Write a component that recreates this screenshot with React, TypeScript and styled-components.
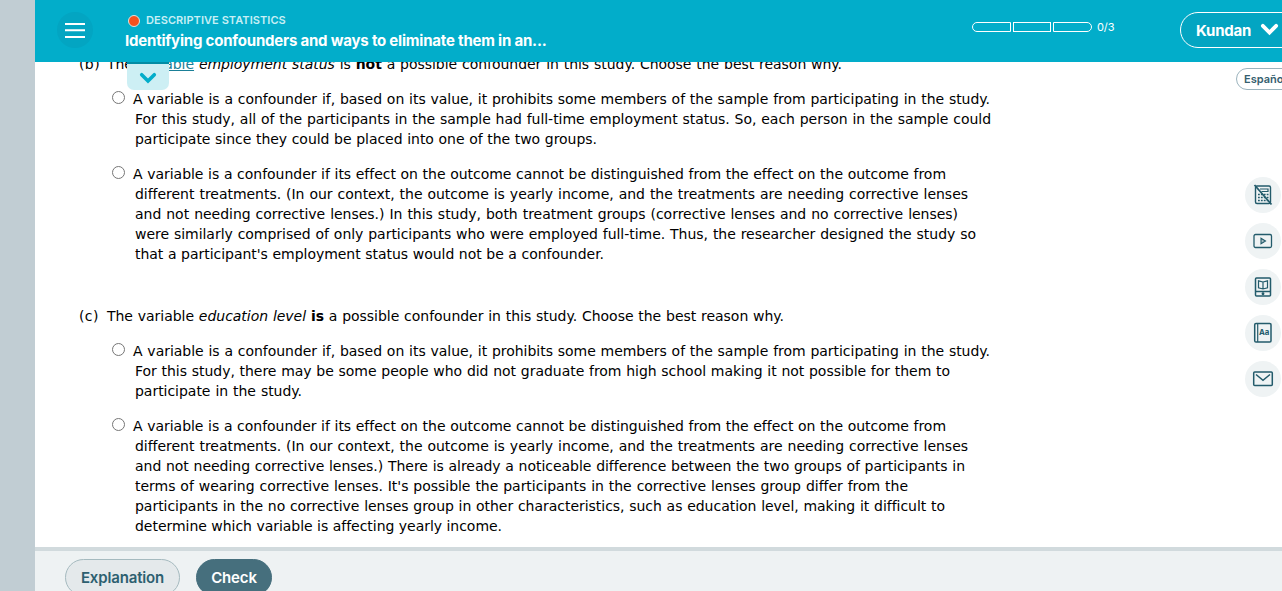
import type { ReactNode } from 'react';
import styled, { createGlobalStyle } from 'styled-components';

const GlobalStyle = createGlobalStyle`
  * {
    box-sizing: border-box;
  }
  body {
    margin: 0;
    overflow: hidden;
    background: #c1cdd3;
  }
`;

const Page = styled.div`
  height: 591px;
  padding-left: 35px;
  display: flex;
  flex-direction: column;
  overflow: hidden;
  background: #c1cdd3;
  font-family: Inter, "Liberation Sans", sans-serif;
`;

const Header = styled.header`
  flex: none;
  height: 62px;
  display: flex;
  align-items: flex-start;
  background: #02adca;
  color: white;
`;

const MenuButton = styled.button`
  flex: none;
  width: 36px;
  height: 36px;
  margin: 12px 0 0 22px;
  padding: 0;
  border: 0;
  border-radius: 50%;
  background: #03a5c2;
`;

const Titles = styled.div`
  width: 440px;
  margin: 13px 0 0 32px;
`;

const Topic = styled.div`
  display: flex;
  align-items: center;
  height: 14px;
  padding-left: 3px;
  gap: 6px;
  color: #c7eff5;
  font-size: 11px;
  font-weight: 600;
  letter-spacing: 0.06px;
  white-space: nowrap;
`;

const TopicDot = styled.span`
  width: 12px;
  height: 12px;
  margin-top: 2px;
  border: 1px solid #d9e5e2;
  border-radius: 50%;
  background: #f4511e;
`;

const LessonTitle = styled.h1`
  margin: 4px 0 0;
  font-size: 15px;
  line-height: 20px;
  font-weight: 700;
  letter-spacing: -0.2px;
  white-space: nowrap;
`;

const Progress = styled.div`
  display: flex;
  align-items: center;
  height: 14px;
  margin: 20px 0 0 407px;
  gap: 2px;
`;

const ProgressStep = styled.span`
  width: 38px;
  height: 10px;
  border: 1px solid white;

  &:first-child {
    width: 39px;
    border-radius: 5px 0 0 5px;
  }
  &:nth-child(3) {
    width: 39px;
    border-radius: 0 5px 5px 0;
  }
`;

const ProgressCount = styled.span`
  margin-left: 3px;
  font-size: 11px;
  line-height: 14px;
  letter-spacing: -0.1px;
`;

const UserButton = styled.button`
  flex: none;
  display: flex;
  align-items: center;
  width: 122px;
  height: 36px;
  margin: 12px -20px 0 auto;
  padding: 0 0 0 15px;
  gap: 9px;
  border: 1px solid white;
  border-radius: 18px;
  background: #03a5c2;
  color: white;
  font: 700 15px Inter, sans-serif;
  letter-spacing: -0.2px;
`;

const Content = styled.main`
  position: relative;
  flex: 1;
  min-height: 0;
  display: flex;
  justify-content: space-between;
  overflow: hidden;
  background: white;
`;

const ExpandTab = styled.button`
  position: absolute;
  left: 92px;
  top: 0;
  width: 42px;
  height: 28px;
  padding: 2px 0 0;
  display: flex;
  align-items: center;
  justify-content: center;
  border: 0;
  border-top: 2px solid #028ca4;
  border-radius: 0 0 7px 7px;
  background: #cdeff4;
`;

const Questions = styled.div`
  flex: none;
  margin-top: -8px;
  padding-left: 44px;
  color: black;
  font-family: Verdana, "DejaVu Sans", sans-serif;
  font-size: 14px;
  line-height: 20px;
`;

const Question = styled.section`
  margin-bottom: 42px;
`;

const Prompt = styled.div`
  display: flex;
`;

const PromptLabel = styled.span`
  width: 28px;
  letter-spacing: 0.4px;
`;

const Option = styled.label`
  display: flex;
  margin-top: 15px;
  padding-left: 33px;
`;

const Radio = styled.input`
  width: 13px;
  height: 13px;
  margin: 2px 8px 0 0;
`;

const OptionText = styled.div`
  padding-left: 2px;
`;

const Line = styled.div<{ $width: number; $outdent?: boolean }>`
  width: ${({ $width }) => $width}px;
  margin-left: ${({ $outdent }) => ($outdent ? -2 : 0)}px;
  height: 20px;
  letter-spacing: -0.03px;
  white-space: nowrap;
  text-align-last: justify;
`;

const Term = styled.a`
  color: #1a7f97;
  text-decoration: underline;
`;

const Tools = styled.aside`
  flex: none;
  width: 46px;
  padding-top: 6px;
  display: flex;
  flex-direction: column;
`;

const LanguageButton = styled.button`
  flex: none;
  width: 70px;
  height: 22px;
  margin-bottom: 87px;
  padding: 0 0 0 7px;
  border: 1px solid #9bb3bd;
  border-radius: 11px;
  background: white;
  color: #36606f;
  font: 600 11px Inter, sans-serif;
  text-align: left;
`;

const ToolButton = styled.button`
  flex: none;
  display: flex;
  align-items: center;
  justify-content: center;
  width: 36px;
  height: 36px;
  margin: 0 0 10px 9px;
  padding: 0;
  border: 0;
  border-radius: 50%;
  background: #eff3f4;
  color: #235b6b;
`;

const Footer = styled.footer`
  flex: none;
  height: 44px;
  display: flex;
  align-items: flex-start;
  padding: 8px 0 0 30px;
  gap: 16px;
  border-top: 4px solid #d1dadd;
  background: #eef2f3;
`;

const ActionButton = styled.button<{ $primary?: boolean }>`
  flex: none;
  width: ${({ $primary }) => ($primary ? 76 : 115)}px;
  height: 37px;
  padding: 0;
  border: 1px solid ${({ $primary }) => ($primary ? '#466f7d' : '#a5babf')};
  border-radius: 19px;
  background: ${({ $primary }) => ($primary ? '#466f7d' : '#e4e9eb')};
  color: ${({ $primary }) => ($primary ? 'white' : '#2d6070')};
  font: 600 15px Inter, sans-serif;
  letter-spacing: -0.15px;
`;

type TextLine = [text: string, width: number];

type QuestionData = {
  label: string;
  prompt: ReactNode;
  promptWidth: number;
  options: TextLine[][];
};

const questions: QuestionData[] = [
  {
    label: '(b)',
    prompt: <>The <Term>variable</Term> <em>employment status</em> is <b>not</b> a possible confounder in this study. Choose the best reason why.</>,
    promptWidth: 735,
    options: [
      [
        ['A variable is a confounder if, based on its value, it prohibits some members of the sample from participating in the study.', 857],
        ['For this study, all of the participants in the sample had full-time employment status. So, each person in the sample could', 856],
        ['participate since they could be placed into one of the two groups.', 462],
      ],
      [
        ['A variable is a confounder if its effect on the outcome cannot be distinguished from the effect on the outcome from', 813],
        ['different treatments. (In our context, the outcome is yearly income, and the treatments are needing corrective lenses', 833],
        ['and not needing corrective lenses.) In this study, both treatment groups (corrective lenses and no corrective lenses)', 823],
        ['were similarly comprised of only participants who were employed full-time. Thus, the researcher designed the study so', 841],
        ["that a participant's employment status would not be a confounder.", 469],
      ],
    ],
  },
  {
    label: '(c)',
    prompt: <>The variable <em>education level</em> <b>is</b> a possible confounder in this study. Choose the best reason why.</>,
    promptWidth: 677,
    options: [
      [
        ['A variable is a confounder if, based on its value, it prohibits some members of the sample from participating in the study.', 857],
        ['For this study, there may be some people who did not graduate from high school making it not possible for them to', 815],
        ['participate in the study.', 167],
      ],
      [
        ['A variable is a confounder if its effect on the outcome cannot be distinguished from the effect on the outcome from', 813],
        ['different treatments. (In our context, the outcome is yearly income, and the treatments are needing corrective lenses', 833],
        ['and not needing corrective lenses.) There is already a noticeable difference between the two groups of participants in', 830],
        ["terms of wearing corrective lenses. It's possible the participants in the corrective lenses group differ from the", 773],
        ['participants in the no corrective lenses group in other characteristics, such as education level, making it difficult to', 810],
        ['determine which variable is affecting yearly income.', 367],
      ],
    ],
  },
];

const MenuIcon = () => (
  <svg width="36" height="36" viewBox="0 0 36 36" stroke="white" strokeWidth="2">
    <path d="M8 12h20M8 18.3h20M8 25h20" />
  </svg>
);

const Chevron = ({ color, width }: { color: string; width: number }) => (
  <svg width={width} height={width * 0.7} viewBox="0 0 20 14" fill="none" stroke={color} strokeWidth="4" strokeLinecap="round">
    <path d="m3 3 7 7 7-7" />
  </svg>
);

const CalculatorOffIcon = () => (
  <svg width="20" height="22" viewBox="0 0 20 22" fill="none" stroke="currentColor" strokeWidth="1.4">
    <rect x="2.5" y="2" width="15" height="17.5" rx="1.5" />
    <path d="M7 5h8v2.5H8.5" strokeWidth="1.2" />
    <path d="M5 10.5h10.5M5 13.5h10.5M5 16.5h10.5" strokeDasharray="1.8 1.1" strokeWidth="1.6" />
    <path d="m1.5 1 17 19.5" strokeWidth="1.8" />
  </svg>
);

const VideoIcon = () => (
  <svg width="20" height="16" viewBox="0 0 20 16" fill="none" stroke="currentColor" strokeWidth="1.3">
    <rect x="1" y="1.5" width="17.5" height="13" rx="1.5" />
    <path d="m8 5.2 4.5 2.8L8 10.8z" fill="#a9bdc4" strokeWidth="1.1" />
  </svg>
);

const EbookIcon = () => (
  <svg width="18" height="20" viewBox="0 0 18 20" fill="none" stroke="currentColor" strokeWidth="1.5">
    <rect x="1.5" y="1" width="15" height="18" rx="1" />
    <path d="M2 14.5h14" />
    <path d="M9 5 4.5 3.8v7L9 12l4.5-1.2v-7zM9 5v7" strokeWidth="1.2" />
    <circle cx="9" cy="16.8" r=".7" />
  </svg>
);

const DictionaryIcon = () => (
  <svg width="20" height="22" viewBox="0 0 20 22" fill="none" stroke="currentColor" strokeWidth="1.5">
    <rect x="1.7" y="1.5" width="16.3" height="18.5" rx="1.3" />
    <path d="M4.7 2v18" strokeWidth="1.2" />
    <text x="6" y="13" fill="currentColor" stroke="none" fontSize="7.8" fontWeight="700" fontFamily="Inter, sans-serif">Aa</text>
  </svg>
);

const MailIcon = () => (
  <svg width="22" height="18" viewBox="0 0 22 18" fill="none" stroke="currentColor" strokeWidth="1.5">
    <rect x="1.7" y="2" width="18.6" height="13.6" rx="1" />
    <path d="m4 4.5 7 5.8 7-5.8" />
  </svg>
);

const tools = [
  { label: 'Calculator unavailable', icon: <CalculatorOffIcon /> },
  { label: 'Video', icon: <VideoIcon /> },
  { label: 'Textbook', icon: <EbookIcon /> },
  { label: 'Dictionary', icon: <DictionaryIcon /> },
  { label: 'Message', icon: <MailIcon /> },
];

const QuestionBlock = ({ label, prompt, promptWidth, options }: QuestionData) => (
  <Question>
    <Prompt>
      <PromptLabel>{label}</PromptLabel>
      <Line $width={promptWidth}>{prompt}</Line>
    </Prompt>
    {options.map((lines, index) => (
      <Option key={index}>
        <Radio type="radio" name={label} />
        <OptionText>
          {lines.map(([text, width], i) => (
            <Line key={text} $width={width} $outdent={i === 0}>{text}</Line>
          ))}
        </OptionText>
      </Option>
    ))}
  </Question>
);

export default function App() {
  return (
    <>
      <GlobalStyle />
      <Page>
        <Header>
          <MenuButton aria-label="Menu"><MenuIcon /></MenuButton>
          <Titles>
            <Topic><TopicDot />DESCRIPTIVE STATISTICS</Topic>
            <LessonTitle>Identifying confounders and ways to eliminate them in an...</LessonTitle>
          </Titles>
          <Progress>
            <ProgressStep />
            <ProgressStep />
            <ProgressStep />
            <ProgressCount>0/3</ProgressCount>
          </Progress>
          <UserButton>Kundan <Chevron color="white" width={19} /></UserButton>
        </Header>
        <Content>
          <Questions>
            {questions.map((question) => (
              <QuestionBlock key={question.label} {...question} />
            ))}
          </Questions>
          <Tools>
            <LanguageButton>Español</LanguageButton>
            {tools.map(({ label, icon }) => (
              <ToolButton key={label} aria-label={label}>{icon}</ToolButton>
            ))}
          </Tools>
          <ExpandTab aria-label="Expand"><Chevron color="#02adca" width={18} /></ExpandTab>
        </Content>
        <Footer>
          <ActionButton>Explanation</ActionButton>
          <ActionButton $primary>Check</ActionButton>
        </Footer>
      </Page>
    </>
  );
}
